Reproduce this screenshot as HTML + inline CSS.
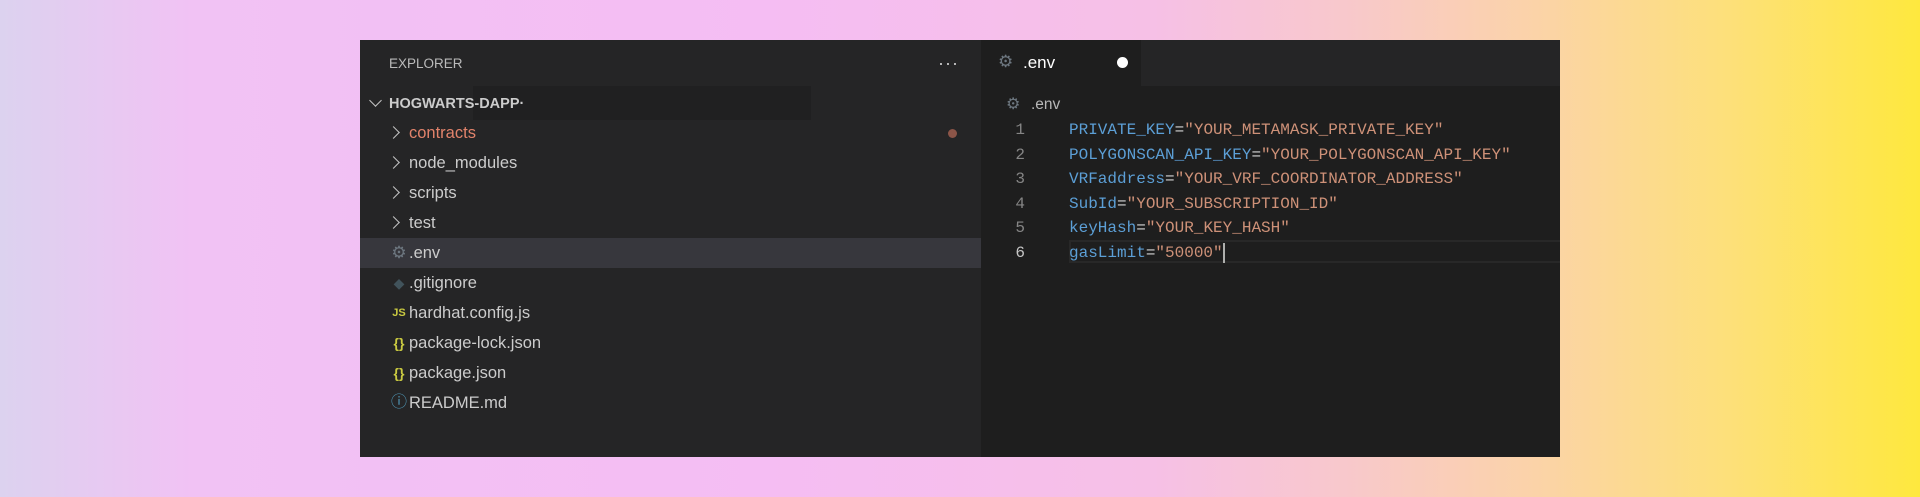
<!DOCTYPE html>
<html><head><meta charset="utf-8"><style>
*{margin:0;padding:0;box-sizing:border-box}
body{width:1920px;height:497px;overflow:hidden;position:relative;
background:linear-gradient(90deg,#dcd2ef 0%,#f1c2f4 10%,#f5bdf3 40%,#f6c0e6 60%,#f8c8cc 70%,#fbd3a8 80%,#fde07a 90%,#fee83e 100%);
font-family:"Liberation Sans",sans-serif}
.win{position:absolute;left:360px;top:40px;width:1200px;height:417px;background:#1e1e1e}
.side{position:absolute;left:0;top:0;width:621px;height:417px;background:#252526;color:#cccccc}
.t{position:absolute;white-space:nowrap}
.row{position:absolute;left:0;width:621px;height:30px;font-size:16.5px;line-height:30px}
.row .ic{position:absolute;left:30px;top:0;width:18px;text-align:center;font-size:14px}
.row .nm{position:absolute;left:49px}
.chev{position:absolute;left:29px;top:10px;width:9px;height:9px;border-right:1.3px solid #c5c5c5;border-top:1.3px solid #c5c5c5;transform:rotate(45deg)}
.ed{position:absolute;left:621px;top:0;width:579px;height:417px;background:#1e1e1e}
.mono{font-family:"Liberation Mono",monospace;font-size:16px}
.k{color:#5c9fd6}.s{color:#ce9178}.e{color:#d4d4d4}
.ln{position:absolute;left:0;width:44px;text-align:right;color:#858585}
</style></head><body>
<div class="win">
 <div class="side">
  <div class="t" style="left:29px;top:16px;font-size:13.5px;color:#bbbbbb">EXPLORER</div>
  <div class="t" style="left:578px;top:13px;font-size:18px;color:#cccccc;letter-spacing:1px">···</div>
  <div style="position:absolute;left:113px;top:46px;width:338px;height:34px;background:#202021"></div>
  <div style="position:absolute;left:11px;top:56px;width:9px;height:9px;border-right:1.3px solid #c5c5c5;border-bottom:1.3px solid #c5c5c5;transform:rotate(45deg)"></div>
  <div class="t" style="left:29px;top:56px;font-size:14.5px;font-weight:bold;color:#cccccc">HOGWARTS-DAPP·</div>
  <div class="row" style="top:78px"><div class="chev"></div><span class="nm" style="color:#e2836b">contracts</span><span style="position:absolute;left:588px;top:11px;width:9px;height:9px;border-radius:50%;background:#8c5548"></span></div>
  <div class="row" style="top:108px"><div class="chev"></div><span class="nm">node_modules</span></div>
  <div class="row" style="top:138px"><div class="chev"></div><span class="nm">scripts</span></div>
  <div class="row" style="top:168px"><div class="chev"></div><span class="nm">test</span></div>
  <div class="row" style="top:198px;background:#37373d"><span class="ic" style="color:#6d7780;font-size:17px">⚙</span><span class="nm">.env</span></div>
  <div class="row" style="top:228px"><span class="ic" style="color:#41535b">◆</span><span class="nm">.gitignore</span></div>
  <div class="row" style="top:258px"><span class="ic" style="color:#cbcb41;font-size:11px;font-weight:bold">JS</span><span class="nm">hardhat.config.js</span></div>
  <div class="row" style="top:288px"><span class="ic" style="color:#cbcb41;font-weight:bold">{}</span><span class="nm">package-lock.json</span></div>
  <div class="row" style="top:318px"><span class="ic" style="color:#cbcb41;font-weight:bold">{}</span><span class="nm">package.json</span></div>
  <div class="row" style="top:348px"><span class="ic" style="color:#519aba;font-size:16px">ⓘ</span><span class="nm">README.md</span></div>
 </div>
 <div class="ed">
  <div style="position:absolute;left:0;top:0;width:579px;height:46px;background:#252526"></div>
  <div style="position:absolute;left:0;top:0;width:160px;height:46px;background:#1e1e1e"></div>
  <div class="t" style="left:17px;top:12px;font-size:17px;color:#6d7780">⚙</div>
  <div class="t" style="left:42px;top:13px;font-size:17px;color:#ffffff">.env</div>
  <div style="position:absolute;left:136px;top:17px;width:11px;height:11px;border-radius:50%;background:#fff"></div>
  <div class="t" style="left:25px;top:54px;font-size:16px;color:#6d7780">⚙</div>
  <div class="t" style="left:50px;top:56px;font-size:15.5px;color:#b8b8b8">.env</div>
  <div style="position:absolute;left:88px;top:200px;width:491px;height:23px;border:2px solid #282828;border-right:none"></div>
  <div class="mono" style="position:absolute;left:0;top:78px;line-height:24.6px">
   <div style="position:relative;height:24.6px"><span class="ln">1</span><span class="t" style="left:88px"><span class="k">PRIVATE_KEY</span><span class="e">=</span><span class="s">"YOUR_METAMASK_PRIVATE_KEY"</span></span></div>
   <div style="position:relative;height:24.6px"><span class="ln">2</span><span class="t" style="left:88px"><span class="k">POLYGONSCAN_API_KEY</span><span class="e">=</span><span class="s">"YOUR_POLYGONSCAN_API_KEY"</span></span></div>
   <div style="position:relative;height:24.6px"><span class="ln">3</span><span class="t" style="left:88px"><span class="k">VRFaddress</span><span class="e">=</span><span class="s">"YOUR_VRF_COORDINATOR_ADDRESS"</span></span></div>
   <div style="position:relative;height:24.6px"><span class="ln">4</span><span class="t" style="left:88px"><span class="k">SubId</span><span class="e">=</span><span class="s">"YOUR_SUBSCRIPTION_ID"</span></span></div>
   <div style="position:relative;height:24.6px"><span class="ln">5</span><span class="t" style="left:88px"><span class="k">keyHash</span><span class="e">=</span><span class="s">"YOUR_KEY_HASH"</span></span></div>
   <div style="position:relative;height:24.6px"><span class="ln" style="color:#c6c6c6">6</span><span class="t" style="left:88px"><span class="k">gasLimit</span><span class="e">=</span><span class="s">"50000"</span><span style="display:inline-block;width:2px;height:20px;background:#aeafad;vertical-align:middle"></span></span></div>
  </div>
 </div>
</div>
</body></html>
